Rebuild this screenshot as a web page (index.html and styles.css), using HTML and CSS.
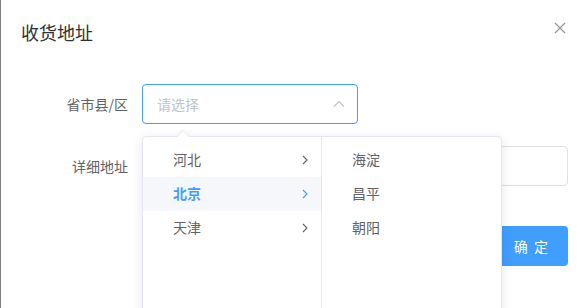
FILE: index.html
```html
<!DOCTYPE html>
<html lang="zh">
  <head>
    <meta charset="UTF-8" />
    <meta name="viewport" content="width=device-width, initial-scale=1.0" />
    <title>收货地址</title>
    <link rel="stylesheet" href="styles.css">
  </head>
  <body>
    <div class="dialog">
      <div class="dialog-header">
        <span class="dialog-title">收货地址</span>
        <button class="close-btn" aria-label="关闭">
          <svg width="12" height="12" viewBox="0 0 12 12">
            <path d="M1 1 L11 11 M11 1 L1 11" stroke="#909399" stroke-width="1.2" fill="none" />
          </svg>
        </button>
      </div>

      <div class="dialog-body">
        <div class="form-item">
          <label class="form-label">省市县/区</label>
          <div class="cascader">
            <div class="cascader-input">
              <span class="placeholder">请选择</span>
              <svg class="suffix" width="12" height="8" viewBox="0 0 12 8">
                <path d="M1 6.5 L6 1.5 L11 6.5" stroke="#c0c4cc" stroke-width="1.2" fill="none" />
              </svg>
            </div>

            <div class="popper">
              <div class="popper-arrow"></div>
              <div class="menus">
                <ul class="menu">
                  <li class="node">河北<svg class="node-arrow" viewBox="0 0 6 10"><path d="M1 1 L5 5 L1 9" fill="none" stroke-width="1.1" /></svg></li>
                  <li class="node active">北京<svg class="node-arrow" viewBox="0 0 6 10"><path d="M1 1 L5 5 L1 9" fill="none" stroke-width="1.1" /></svg></li>
                  <li class="node">天津<svg class="node-arrow" viewBox="0 0 6 10"><path d="M1 1 L5 5 L1 9" fill="none" stroke-width="1.1" /></svg></li>
                </ul>
                <ul class="menu">
                  <li class="node">海淀</li>
                  <li class="node">昌平</li>
                  <li class="node">朝阳</li>
                </ul>
              </div>
            </div>
          </div>
        </div>

        <div class="form-item">
          <label class="form-label">详细地址</label>
          <input class="text-input" type="text" />
        </div>
      </div>

      <div class="dialog-footer">
        <button class="primary-btn">确 定</button>
      </div>
    </div>
  </body>
</html>
```

FILE: styles.css
```css
* {
  margin: 0;
  padding: 0;
  box-sizing: border-box;
}

body {
  font-family: "Helvetica Neue", "Noto Sans CJK SC", "Noto Sans", sans-serif;
  background: #808080;
  width: 586px;
  height: 308px;
  overflow: hidden;
  padding-left: 1px;
}

.dialog {
  background: white;
  width: 587px;
  height: 308px;
  position: relative;
  overflow: hidden;
}

.dialog-header {
  display: flex;
  justify-content: space-between;
  align-items: center;
  padding: 20px 20px 10px;
}

.dialog-title {
  font-size: 18px;
  line-height: 24px;
  color: #303133;
}

.close-btn {
  background: none;
  border: none;
  width: 16px;
  height: 16px;
  display: flex;
  align-items: center;
  justify-content: center;
  margin-top: -8px;
  cursor: pointer;
}

.dialog-body {
  padding: 30px 20px;
}

.form-item {
  display: flex;
  margin-bottom: 22px;
}

.form-item:last-child {
  margin-bottom: 0;
}

.form-label {
  width: 121px;
  flex-shrink: 0;
  text-align: right;
  padding-right: 14px;
  font-size: 14px;
  line-height: 40px;
  color: #606266;
}

.cascader {
  position: relative;
  width: 216px;
}

.cascader-input {
  height: 40px;
  border: 1px solid #409eff;
  border-radius: 4px;
  display: flex;
  align-items: center;
  justify-content: space-between;
  padding: 0 12px 0 14px;
}

.placeholder {
  font-size: 14px;
  color: #c0c4cc;
}

.text-input {
  flex: 1;
  height: 40px;
  border: 1px solid #dcdfe6;
  border-radius: 4px;
  outline: none;
}

.popper {
  position: absolute;
  top: 52px;
  left: 0;
  z-index: 10;
  background: white;
  border: 1px solid #e4e7ed;
  border-radius: 4px;
  box-shadow: 0 2px 12px 0 rgba(0, 0, 0, 0.1);
}

.popper-arrow {
  position: absolute;
  top: -7px;
  left: 34px;
  width: 0;
  height: 0;
  border: 6px solid transparent;
  border-top-width: 0;
  border-bottom-color: #e4e7ed;
}

.popper-arrow::after {
  content: "";
  position: absolute;
  top: 1px;
  left: -6px;
  border: 6px solid transparent;
  border-top-width: 0;
  border-bottom-color: white;
}

.menus {
  display: flex;
}

.menu {
  list-style: none;
  width: 179px;
  height: 204px;
  padding: 6px 0;
  border-right: 1px solid #e4e7ed;
}

.menu:last-child {
  border-right: none;
}

.node {
  height: 34px;
  line-height: 33px;
  padding: 0 30px;
  font-size: 14px;
  color: #606266;
  position: relative;
}

.node.active {
  background: #f5f7fa;
  color: #409eff;
  font-weight: bold;
}

.node-arrow {
  position: absolute;
  right: 13px;
  top: 12px;
  width: 6px;
  height: 10px;
  stroke: #606266;
}

.node.active .node-arrow {
  stroke: #409eff;
}

.dialog-footer {
  padding: 10px 20px 20px;
  display: flex;
  justify-content: flex-end;
}

.primary-btn {
  background: #409eff;
  color: white;
  border: none;
  border-radius: 4px;
  height: 40px;
  padding: 0 20px;
  font-size: 14px;
  font-family: inherit;
  word-spacing: 3px;
  cursor: pointer;
}
```
